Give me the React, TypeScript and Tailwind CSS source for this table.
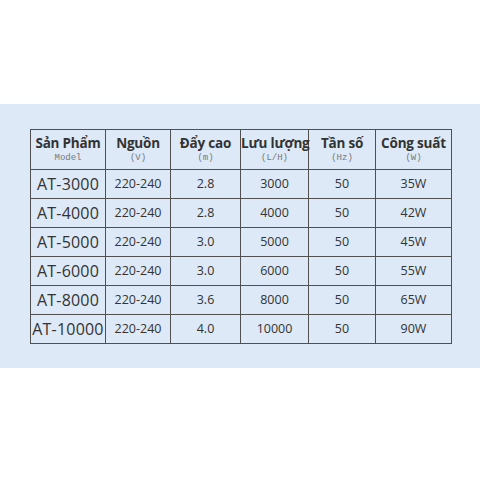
const headers = [
  { title: 'Sản Phẩm', sub: 'Model', w: 'w-[75px]' },
  { title: 'Nguồn', sub: '(V)', w: 'w-[65px]' },
  { title: 'Đẩy cao', sub: '(m)', w: 'w-[70px]' },
  { title: 'Lưu lượng', sub: '(L/H)', w: 'w-[68px]' },
  { title: 'Tần số', sub: '(Hz)', w: 'w-[67px]' },
  { title: 'Công suất', sub: '(W)', w: 'w-[76px]' },
]

const rows = [
  ['AT-3000', '220-240', '2.8', '3000', '50', '35W'],
  ['AT-4000', '220-240', '2.8', '4000', '50', '42W'],
  ['AT-5000', '220-240', '3.0', '5000', '50', '45W'],
  ['AT-6000', '220-240', '3.0', '6000', '50', '55W'],
  ['AT-8000', '220-240', '3.6', '8000', '50', '65W'],
  ['AT-10000', '220-240', '4.0', '10000', '50', '90W'],
]

export default function App() {
  return (
    <div className="w-[480px] h-[480px] bg-white pt-[104px]" style={{ fontFamily: '"Open Sans", "Noto Sans", sans-serif' }}>
      <div className="bg-[#dde9f6] h-[264px] pt-[25px] pl-[30px]">
        <table className="table-fixed border-collapse w-[421px] text-[#333]">
          <thead>
            <tr className="h-[40px]">
              {headers.map((h) => (
                <th key={h.title} className={`${h.w} border-[1.5px] border-[#505050] p-0 text-center align-middle`}>
                  <div className="text-[13.5px] font-bold leading-[17px] tracking-[-0.2px] whitespace-nowrap">{h.title}</div>
                  <div className="text-[9px] font-normal leading-[12px] text-[#777]" style={{ fontFamily: '"Liberation Mono", "DejaVu Sans Mono", monospace' }}>
                    {h.sub}
                  </div>
                </th>
              ))}
            </tr>
          </thead>
          <tbody>
            {rows.map((r) => (
              <tr key={r[0]} className="h-[29px]">
                {r.map((c, i) => (
                  <td
                    key={i}
                    className={`border-[1.5px] border-[#505050] p-0 text-center align-middle whitespace-nowrap ${
                      i === 0 ? 'text-[16px] tracking-[0.2px]' : 'text-[12.5px]'
                    }`}
                  >
                    {c}
                  </td>
                ))}
              </tr>
            ))}
          </tbody>
        </table>
      </div>
    </div>
  )
}
